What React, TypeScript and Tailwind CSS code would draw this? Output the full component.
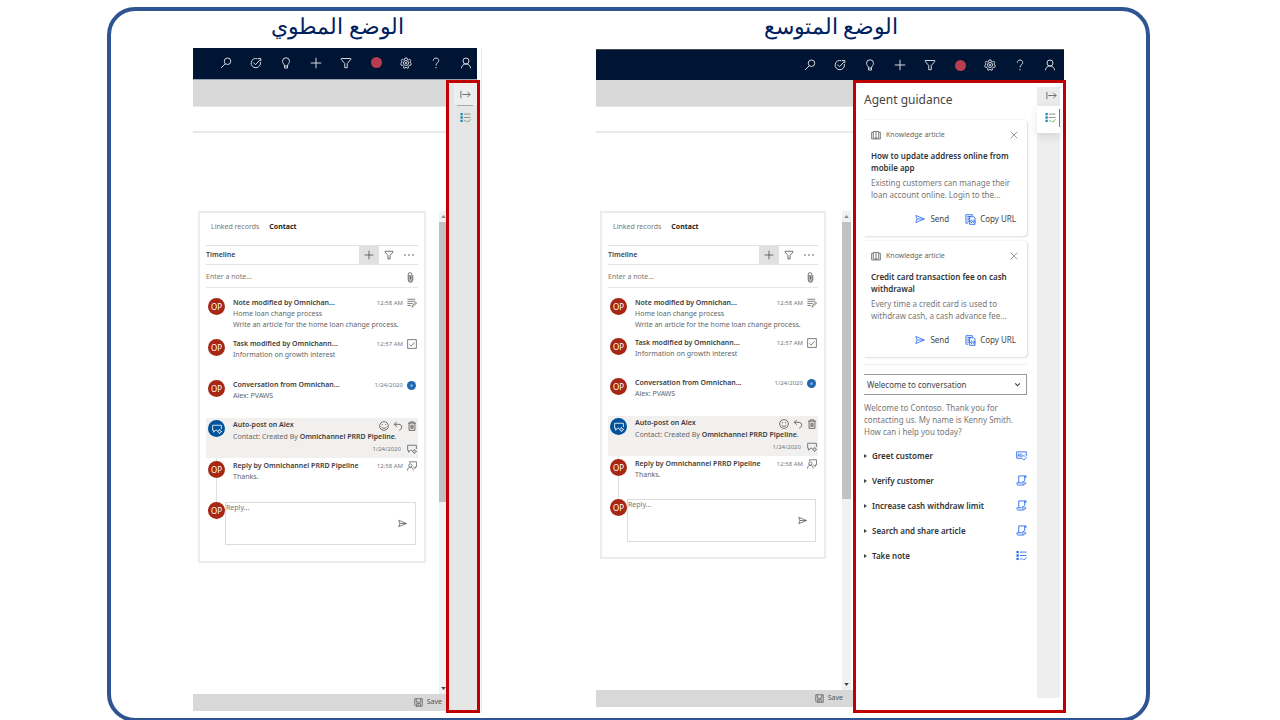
import type { ReactNode } from "react";

type IconProps = { className?: string };

function Svg({ className = "size-3", children }: { className?: string; children: ReactNode }) {
  return (
    <svg
      viewBox="0 0 24 24"
      fill="none"
      stroke="currentColor"
      strokeWidth={2}
      className={`shrink-0 ${className}`}
      aria-hidden="true"
    >
      {children}
    </svg>
  );
}

const SearchIcon = (p: IconProps) => (
  <Svg {...p}>
    <circle cx="15" cy="8.5" r="6.5" />
    <path d="M10.5 13.5 2 22" />
  </Svg>
);
const TargetIcon = (p: IconProps) => (
  <Svg {...p}>
    <path d="M15 3.600A9.300 9.300 0 1 0 20.600 10" />
    <path d="m6.500 11 4.500 4.500L20.500 5M16 3h5.500v5.500" />
  </Svg>
);
const BulbIcon = (p: IconProps) => (
  <Svg {...p}>
    <path d="M9 18c0-4-4-5-4-9.500a7 7 0 0 1 14 0C19 13 15 14 15 18z" />
    <path d="M9 18v4h6v-4" />
  </Svg>
);
const PlusIcon = (p: IconProps) => (
  <Svg {...p}>
    <path d="M12 1.500v21M1.500 12h21" />
  </Svg>
);
const FilterIcon = (p: IconProps) => (
  <Svg {...p}>
    <path d="M2.500 3h19v2L14.500 13v8.500h-5V13L2.500 5z" />
  </Svg>
);
const GearIcon = (p: IconProps) => (
  <Svg {...p}>
    <path d="m10 2-.7 2.800-2.300 1-2.500-1.500L2.500 7l1.300 2.500L3 12l-1.500 1 1 3.500 3 .2 1.800 2L7 21.500l3 1 2-2.500 2 2.500 3-1-.3-2.800 1.800-2 3-.2 1-3.500L21 12l-.8-2.500L21.500 7l-2-2.700L17 5.800l-2.300-1L14 2z" />
    <circle cx="12" cy="12" r="5" />
    <circle cx="12" cy="12" r="1.500" />
  </Svg>
);
const HelpIcon = (p: IconProps) => (
  <Svg {...p}>
    <path d="M6.500 7.500C6.500 4 9 2 12 2s5.500 2 5.500 5c0 4.500-5.500 4.500-5.500 10" />
    <path d="M12 20v2.500" />
  </Svg>
);
const PersonIcon = (p: IconProps) => (
  <Svg {...p}>
    <circle cx="12" cy="8" r="6" />
    <path d="M3 22.500c0-5 4-8.500 9-8.500s9 3.500 9 8.500" />
  </Svg>
);
const ExpandIcon = (p: IconProps) => (
  <Svg {...p}>
    <path d="M2 4v16M5 12h17M16 6l6 6-6 6" />
  </Svg>
);
const ClipIcon = (p: IconProps) => (
  <Svg {...p}>
    <path d="M9 6v11a3 3 0 0 0 6 0V6a4 4 0 0 0-8-1v12a5 5 0 0 0 10 1V7M12 7v10" />
  </Svg>
);
const NoteIcon = (p: IconProps) => (
  <Svg {...p}>
    <path d="M1 3h19M1 8h19M1 13h13M1 18h8" />
    <path d="m12 22 1-4 8-8 2 2-8 8z" />
  </Svg>
);
const TaskIcon = (p: IconProps) => (
  <Svg {...p}>
    <path d="M1.500 1.500h21v21h-21z" />
    <path d="m6 13 4 4 8-9" />
  </Svg>
);
const SmileIcon = (p: IconProps) => (
  <Svg {...p}>
    <circle cx="12" cy="12" r="10.500" />
    <path d="M6.500 14c1.500 5 9.500 5 11 0M8 7.500v2.500M16 7.500v2.500" />
  </Svg>
);
const UndoIcon = (p: IconProps) => (
  <Svg {...p}>
    <path d="M9 2 3 8l6 6M3 8h11c9 0 9 12 1 14" />
  </Svg>
);
const TrashIcon = (p: IconProps) => (
  <Svg {...p}>
    <path d="M2.500 5h19M8 5V2h8v3M5 5v17.500h14V5M9.500 9v10M14.500 9v10M12 9v10" />
  </Svg>
);
const PostIcon = (p: IconProps) => (
  <Svg {...p}>
    <path d="M13 15H8l-4 5v-5H1.500V3h21v9" />
    <circle cx="18" cy="18" r="3.500" />
    <path d="M18 12.500v2M18 21.500v2M12.500 18h2M21.500 18h2" />
  </Svg>
);
const ReplyPersonIcon = (p: IconProps) => (
  <Svg {...p}>
    <circle cx="8" cy="11" r="4" />
    <path d="M1 23c0-5 3-8 7-8s7 3 7 8M6 5V2h17v12h-3v4l-5-4" />
  </Svg>
);
const SendIcon = (p: IconProps) => (
  <Svg {...p}>
    <path d="M2 3.500 22.500 12 2 20.500 5 12zM5 12h17" />
  </Svg>
);
const SaveIcon = (p: IconProps) => (
  <Svg {...p}>
    <path d="M2 2h20v20H5l-3-3zM6 2v9h12V2M7 22v-7h10v7M11 17v5" />
  </Svg>
);
const BookIcon = (p: IconProps) => (
  <Svg {...p}>
    <path d="M12 3.500V21M5.500 3.500h13v16h-13zM5.500 5.500H1.500v16h21v-16h-4" />
  </Svg>
);
const CloseIcon = (p: IconProps) => (
  <Svg {...p}>
    <path d="m2 2 20 20M22 2 2 22" />
  </Svg>
);
const CopyIcon = (p: IconProps) => (
  <Svg {...p}>
    <path d="M7 20H2V1.500h14V5M5 5.500h8M5 9h5M5 12.500h5M5 16h5M22 12V9l-3-3H10v16.500h12V12" />
    <path d="M15.500 13a2.800 2.800 0 0 0 0 6M18 13a2.800 2.800 0 0 1 0 6M14.500 16h4.500" />
  </Svg>
);
const ChevronDownIcon = (p: IconProps) => (
  <Svg {...p}>
    <path d="m4 8 8 8 8-8" strokeWidth={3.500} />
  </Svg>
);
const ScriptIcon = (p: IconProps) => (
  <Svg {...p}>
    <path d="M6 17V2h16M19 2v11M22 2v3h-3M6 17H2v1c0 3 1 4 3 4h9M6 17h7" />
    <path d="m15 13.500 7 4.500-7 4.500z" />
  </Svg>
);
const AbcIcon = (p: IconProps) => (
  <Svg {...p}>
    <path d="M14 18H1.500V4h21v10" />
    <path d="m4 14.500 2-6.500 2 6.500M4.800 12.500h2.400M10.500 7v7.500h1.500a2 2 0 0 0 0-4h-1.500M19 11h-1.500a2 2 0 0 0 0 3.500H19" strokeWidth={1.600} />
    <path d="m14 19 3 3 6-6" />
  </Svg>
);

function ListIcon({ className, dot, line, check }: IconProps & { dot: string; line: string; check: string }) {
  return (
    <Svg className={className}>
      <path d="M1 2h5v5H1zM1 9.500h5v5H1zM1 17h5v5H1z" fill={dot} stroke="none" />
      <path d="M8.500 4.500H23M8.500 12H23M8.500 19.500h4" stroke={line} />
      <path d="m14 19 3 3 6-6" stroke={check} />
    </Svg>
  );
}

const navItems = [
  { name: "Search", icon: <SearchIcon /> },
  { name: "Tasks", icon: <TargetIcon /> },
  { name: "Insights", icon: <BulbIcon /> },
  { name: "New", icon: <PlusIcon /> },
  { name: "Filter", icon: <FilterIcon /> },
  { name: "Presence", icon: <span className="block size-[11px] rounded-full bg-[#b83d4e]" /> },
  { name: "Settings", icon: <GearIcon /> },
  { name: "Help", icon: <HelpIcon /> },
  { name: "Account", icon: <PersonIcon /> },
];

function NavBar({ className }: { className: string }) {
  return (
    <nav className={`flex items-center justify-end gap-[18px] bg-[#001433] text-[#d5d8de] ${className}`}>
      {navItems.map((item) => (
        <button key={item.name} aria-label={item.name} className="flex h-3 w-3 items-center justify-center">
          {item.icon}
        </button>
      ))}
    </nav>
  );
}

function Avatar({ post = false }: { post?: boolean }) {
  return (
    <span
      className={`z-10 flex size-[17px] shrink-0 items-center justify-center rounded-full text-[8px] text-white ${
        post ? "bg-[#00529b]" : "bg-[#a52714]"
      }`}
    >
      {post ? <PostIcon className="size-[10px]" /> : "OP"}
    </span>
  );
}

function Entry({
  title,
  time,
  icon,
  lines,
  className,
}: {
  title: string;
  time: string;
  icon: ReactNode;
  lines: string[];
  className: string;
}) {
  return (
    <li className={`flex gap-2 pl-[2px] ${className}`}>
      <Avatar />
      <div className="min-w-0 flex-1 whitespace-nowrap">
        <div className="flex h-[10px] items-center">
          <h3 className="text-[7px] font-semibold text-[#3c3c3c]">{title}</h3>
          <time className="mr-1 ml-auto text-[6px] text-[#777]">{time}</time>
          <span className="flex w-[11px] text-[#666]">{icon}</span>
        </div>
        {lines.map((line) => (
          <p key={line} className="text-[7px] leading-[11px] text-[#666]">
            {line}
          </p>
        ))}
      </div>
    </li>
  );
}

function Timeline({ id, rowClass, cardClass }: { id: string; rowClass: string; cardClass: string }) {
  return (
    <section className={`mt-[78px] flex flex-col self-start border-2 border-[#ececec] px-[6px] ${cardClass}`}>
      <div className="flex h-8 items-center gap-[10px] pb-1 pl-[5px] text-[7px]">
        <button className="text-[#777]">Linked records</button>
        <button className="font-bold text-[#222]">Contact</button>
      </div>
      <div className="flex h-5 items-center border-y border-[#e2e2e2] text-[#555]">
        <h2 className="flex-1 text-[7px] font-semibold text-[#444]">Timeline</h2>
        <button aria-label="Add" className="flex h-full w-5 items-center justify-center bg-[#e1e1e1]">
          <PlusIcon className="size-[10px]" />
        </button>
        <button aria-label="Filter timeline" className="flex w-5 justify-center">
          <FilterIcon className="size-[10px]" />
        </button>
        <button aria-label="More" className="flex w-[19px] justify-center">
          <svg viewBox="0 0 10 2" className="h-[2px] w-[10px] fill-current" aria-hidden="true">
            <circle cx="1" cy="1" r="0.800" />
            <circle cx="5" cy="1" r="0.800" />
            <circle cx="9" cy="1" r="0.800" />
          </svg>
        </button>
      </div>
      <div className="flex h-[23px] items-center border-b border-[#e6e6e6] pt-[2px] pr-[2px]">
        <input
          id={`${id}-note`}
          aria-label="Note"
          placeholder="Enter a note..."
          className="min-w-0 flex-1 text-[7px] placeholder:text-[#777]"
        />
        <button aria-label="Attach" className="text-[#666]">
          <ClipIcon className="size-[11px]" />
        </button>
      </div>
      <ul className="pt-[10px]">
        <Entry
          className={rowClass}
          title="Note modified by Omnichan..."
          time="12:58 AM"
          icon={<NoteIcon className="size-[10px]" />}
          lines={["Home loan change process", "Write an article for the home loan change process."]}
        />
        <Entry
          className={rowClass}
          title="Task modified by Omnichann..."
          time="12:57 AM"
          icon={<TaskIcon className="size-[10px]" />}
          lines={["Information on growth interest"]}
        />
        <Entry
          className="h-[38px]"
          title="Conversation from Omnichan..."
          time="1/24/2020"
          icon={
            <span className="flex size-[9px] items-center justify-center rounded-full bg-[#2067b0]">
              <span className="size-[3px] rounded-full bg-[#6ea6dc]" />
            </span>
          }
          lines={["Alex: PVAWS"]}
        />
        <li className="flex h-10 gap-2 bg-[#f2f0ef] pt-[2px] pl-[2px]">
          <Avatar post />
          <div className="min-w-0 flex-1 text-[7px] whitespace-nowrap text-[#666]">
            <div className="flex h-[11px] items-center">
              <h3 className="flex-1 font-semibold text-[#3c3c3c]">Auto-post on Alex</h3>
              <div className="flex gap-1 pr-px text-[#555]">
                <button aria-label="React">
                  <SmileIcon className="size-[10px]" />
                </button>
                <button aria-label="Reply">
                  <UndoIcon className="size-[10px]" />
                </button>
                <button aria-label="Delete">
                  <TrashIcon className="size-[10px]" />
                </button>
              </div>
            </div>
            <p className="leading-[12px]">
              Contact: Created By <b className="font-semibold text-[#3c3c3c]">Omnichannel PRRD Pipeline</b>.
            </p>
            <div className="flex h-3 items-center justify-end gap-[6px] pr-px">
              <time className="text-[6px] text-[#777]">1/24/2020</time>
              <PostIcon className="size-[10px]" />
            </div>
          </div>
        </li>
        <li className="relative">
          <span className="absolute top-0 left-[10px] h-full w-px bg-[#dedede]" />
          <ul className="pt-[3px]">
            <Entry
              className={rowClass}
              title="Reply by Omnichannel PRRD Pipeline"
              time="12:58 AM"
              icon={<ReplyPersonIcon className="size-[10px]" />}
              lines={["Thanks."]}
            />
          </ul>
        </li>
        <li className="flex pr-[2px] pl-[2px]">
          <Avatar />
          <div className="flex h-[43px] flex-1 items-center border border-[#dcdcdc] pr-2">
            <textarea
              id={`${id}-reply`}
              aria-label="Reply"
              placeholder="Reply..."
              className="h-full min-w-0 flex-1 resize-none text-[7px] placeholder:text-[#777]"
            />
            <button aria-label="Send reply" className="text-[#555]">
              <SendIcon className="size-[9px]" />
            </button>
          </div>
        </li>
      </ul>
    </section>
  );
}

function Workspace({
  id,
  rowClass,
  cardClass,
  scrollClass,
  thumbClass,
  footerClass,
  className,
}: {
  id: string;
  rowClass: string;
  cardClass: string;
  scrollClass: string;
  thumbClass: string;
  footerClass: string;
  className: string;
}) {
  return (
    <div className={`flex min-w-0 flex-1 flex-col ${className}`}>
      <div className="h-[26px] bg-[#d8d8d8]" />
      <div className="h-[27px] border-t border-b-2 border-[#e9e9e9]" />
      <div className="flex flex-1 justify-between">
        <Timeline id={id} rowClass={rowClass} cardClass={cardClass} />
        <div className={`mt-[78px] flex flex-col bg-[#f1f1f1] ${scrollClass}`}>
          <svg viewBox="0 0 6 4" className="my-1 h-[3px] w-[5px] fill-[#888]" aria-hidden="true">
            <path d="M3 0 6 4H0z" />
          </svg>
          <div className={`w-full bg-[#c1c1c1] ${thumbClass}`} />
          <svg viewBox="0 0 6 4" className="mt-auto mb-1 h-[3px] w-[5px] fill-[#444]" aria-hidden="true">
            <path d="M0 0h6L3 4z" />
          </svg>
        </div>
      </div>
      <footer className={`flex h-[17px] items-center justify-end bg-[#d8d8d8] ${footerClass}`}>
        <button className="flex items-center gap-1 text-[7px] text-[#555]">
          <SaveIcon className="size-[9px]" />
          Save
        </button>
      </footer>
    </div>
  );
}

function Article({ title, body }: { title: string; body: string[] }) {
  return (
    <article className="flex h-[117px] flex-col rounded-r-sm border-t border-[#f6f6f6] pt-[9px] pr-[9px] pl-[7px] whitespace-nowrap shadow-[1px_1px_2px_rgba(0,0,0,0.14)]">
      <header className="flex h-3 items-center text-[#666]">
        <BookIcon className="size-[10px]" />
        <span className="ml-[5px] flex-1 text-[7px]">Knowledge article</span>
        <button aria-label="Dismiss">
          <CloseIcon className="size-2" />
        </button>
      </header>
      <h3 className="mt-[9px] text-[8px] leading-[12px] font-semibold whitespace-normal text-[#333]">{title}</h3>
      <p className="mt-[3px] text-[8px] leading-[12px] text-[#777]">
        {body[0]}
        <br />
        {body[1]}
      </p>
      <div className="mt-3 flex justify-end gap-4 pr-[2px] text-[8px] leading-[12px] text-[#444]">
        <button className="flex items-center gap-[5px]">
          <SendIcon className="size-[10px] text-[#2f6fed]" />
          Send
        </button>
        <button className="flex items-center gap-1">
          <CopyIcon className="size-[11px] text-[#2f6fed]" />
          Copy URL
        </button>
      </div>
    </article>
  );
}

const steps = [
  { label: "Greet customer", icon: <AbcIcon className="size-[11px]" /> },
  { label: "Verify customer", icon: <ScriptIcon className="size-[11px]" /> },
  { label: "Increase cash withdraw limit", icon: <ScriptIcon className="size-[11px]" /> },
  { label: "Search and share article", icon: <ScriptIcon className="size-[11px]" /> },
  {
    label: "Take note",
    icon: <ListIcon className="size-[11px]" dot="#2f6fed" line="#2f6fed" check="#2f6fed" />,
  },
];

function GuidancePanel() {
  return (
    <aside className="flex h-[633px] w-[213px] shrink-0 justify-between border-3 border-[#c00000] pr-[3px] pl-2">
      <div className="w-[163px]">
        <h2 className="pt-2 pb-[11px] text-[12px] leading-[17px] text-[#444]">Agent guidance</h2>
        <div className="flex flex-col gap-1">
          <Article
            title="How to update address online from mobile app"
            body={["Existing customers can manage their", "loan account online. Login to the..."]}
          />
          <Article
            title="Credit card transaction fee on cash withdrawal"
            body={["Every time a credit card is used to", "withdraw cash, a cash advance fee..."]}
          />
        </div>
        <hr className="mt-[7px] border-[#ededed]" />
        <div className="relative mt-[9px] flex items-center text-[#444]">
          <select
            aria-label="Script"
            className="h-[21px] w-full appearance-none border border-l-0 border-[#999] pl-[3px] text-[8px]"
          >
            <option>Welecome to conversation</option>
          </select>
          <ChevronDownIcon className="pointer-events-none absolute right-[6px] size-[7px]" />
        </div>
        <p className="mt-[7px] text-[8px] leading-[12px] whitespace-nowrap text-[#777]">
          Welcome to Contoso. Thank you for
          <br />
          contacting us. My name is Kenny Smith.
          <br />
          How can i help you today?
        </p>
        <ul className="mt-[5px]">
          {steps.map((step) => (
            <li key={step.label}>
              <button className="flex h-[25px] w-full items-center text-left text-[8px] font-semibold whitespace-nowrap text-[#333]">
                <svg viewBox="0 0 3 4" className="h-1 w-[3px] fill-[#444]" aria-hidden="true">
                  <path d="M0 0 3 2 0 4z" />
                </svg>
                <span className="flex-1 pl-[5px]">{step.label}</span>
                <span className="text-[#2f6fed]">{step.icon}</span>
              </button>
            </li>
          ))}
        </ul>
      </div>
      <div className="mt-1 mb-3 flex w-[23px] flex-col bg-[#eeeeee]">
        <button
          aria-label="Collapse panel"
          className="flex h-[19px] items-center justify-center bg-[#ebebeb] pb-[2px] pl-[5px] text-[#666]"
        >
          <ExpandIcon className="size-[11px]" />
        </button>
        <button
          aria-label="Agent guidance"
          className="flex h-[27px] items-center justify-between bg-white pl-2 shadow-[0_4px_10px_rgba(0,0,0,0.1)]"
        >
          <ListIcon className="mb-1 size-[11px]" dot="#1f8ab5" line="#888" check="#4fae4f" />
          <span className="mb-1 h-[18px] w-px bg-[#5b78e0]" />
        </button>
      </div>
    </aside>
  );
}

export default function App() {
  return (
    <main className="h-screen overflow-hidden bg-white pt-[7px] pr-[130px] pl-[107px] font-['Noto_Sans','Open_Sans',sans-serif]">
      <div className="grid grid-cols-[82fr_289fr_114fr_470fr_80fr] rounded-[28px] border-4 border-[#2f5492]">
        <section className="col-start-2 flex flex-col">
          <h1
            dir="rtl"
            lang="ar"
            className="h-[37px] text-center font-['Liberation_Serif','Times_New_Roman',serif] text-[22px] leading-[32px] text-[#002060]"
          >
            الوضع المطوي
          </h1>
          <div className="flex flex-col border-r border-[#e8e8e8]">
            <NavBar className="mr-1 h-8 border-b border-[#9aa3b3] pr-[5px] pb-[2px]" />
            <div className="flex h-[633px]">
              <Workspace
                id="collapsed"
                className="mb-[2px]"
                rowClass="h-[41px]"
                cardClass="ml-[5px] h-[352px] w-[228px]"
                scrollClass="w-[7px] items-end"
                thumbClass="h-[280px]"
                footerClass="pr-1"
              />
              <aside className="mr-px flex w-[34px] shrink-0 flex-col items-center border-3 border-[#c00000] bg-[#e6e6e6] pl-1">
                <button aria-label="Expand panel" className="flex h-[22px] w-[23px] items-center justify-center bg-[#eeeeee] text-[#666]">
                  <ExpandIcon className="size-[11px]" />
                </button>
                <hr className="w-[16px] border-[#aaa]" />
                <button aria-label="Agent guidance" className="mt-[6px]">
                  <ListIcon className="size-[11px]" dot="#1f8ab5" line="#888" check="#4fae4f" />
                </button>
              </aside>
            </div>
          </div>
        </section>
        <section className="col-start-4 flex flex-col">
          <h1
            dir="rtl"
            lang="ar"
            className="h-[38px] text-center font-['Liberation_Serif','Times_New_Roman',serif] text-[22px] leading-[32px] text-[#002060]"
          >
            الوضع المتوسع
          </h1>
          <NavBar className="mr-[2px] h-[31px] border-t border-[#4a4a4a] pr-2" />
          <div className="flex h-[638px]">
            <Workspace
              id="expanded"
              className="mb-[11px]"
              rowClass="h-10"
              cardClass="ml-1 h-[348px] w-[226px]"
              scrollClass="mr-[2px] w-[9px] items-center"
              thumbClass="h-[277px]"
              footerClass="pr-[10px]"
            />
            <GuidancePanel />
          </div>
        </section>
      </div>
    </main>
  );
}
